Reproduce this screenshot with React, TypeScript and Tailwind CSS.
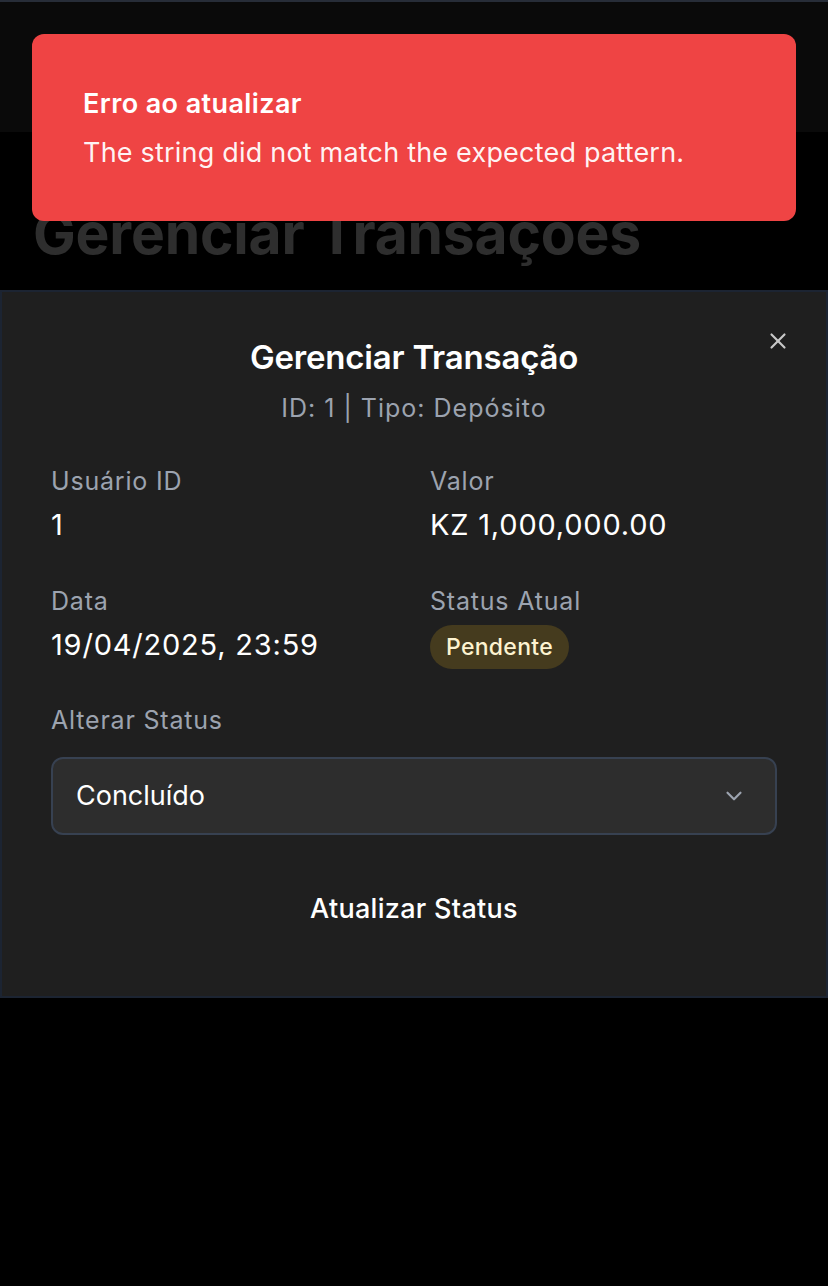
import { X, ChevronDown } from "lucide-react"

const font = { fontFamily: "Inter, 'Noto Sans', sans-serif" }

const Field = ({ label, children }: { label: string; children: React.ReactNode }) => (
  <div className="flex flex-col">
    <span className="text-[25px] leading-[32px] tracking-[0.8px] text-[#9ca3af]">{label}</span>
    {children}
  </div>
)

export default function App() {
  return (
    <div style={font} className="relative min-h-[1286px] w-full bg-black text-white">
      {/* page header behind overlay */}
      <header className="h-[132px] border-t-2 border-[#272d38] bg-[#0a0a0a]" />
      <div className="h-[158px] px-[33px] pt-[74px]">
        <h1 className="text-[57px] font-bold leading-[56px] tracking-[-0.2px] text-[#2e2e2e]">
          Gerenciar Transações
        </h1>
      </div>

      {/* modal */}
      <div className="relative border-2 border-[#1c2432] bg-[#1f1f1f] px-[49px] pb-[57px] pt-[45px]">
        <button className="absolute right-[35px] top-[36px] text-[#c8c8c8]">
          <X size={26} strokeWidth={2} />
        </button>
        <h2 className="text-center text-[33px] font-semibold leading-[40px] tracking-[-0.2px]">
          Gerenciar Transação
        </h2>
        <p className="mt-[15px] text-center text-[25px] leading-[32px] tracking-[1px] text-[#9ca3af]">
          ID: 1 | Tipo: Depósito
        </p>

        <div className="mt-[41px] grid grid-cols-2 gap-x-8 gap-y-[42px]">
          <Field label="Usuário ID">
            <span className="mt-[10px] text-[29px] leading-[36px] tracking-[0.8px]">1</span>
          </Field>
          <Field label="Valor">
            <span className="mt-[10px] text-[29px] leading-[36px] tracking-[0.8px]">KZ 1,000,000.00</span>
          </Field>
          <Field label="Data">
            <span className="mt-[10px] text-[29px] leading-[36px] tracking-[0.8px]">19/04/2025, 23:59</span>
          </Field>
          <Field label="Status Atual">
            <span className="mt-[8px] flex h-[44px] w-fit items-center rounded-full bg-[#453b1e] px-[16px] text-[23px] font-medium tracking-[0.3px] text-[#fdf3d0]">
              Pendente
            </span>
          </Field>
        </div>

        <p className="mt-[35px] text-[25px] leading-[32px] tracking-[0.8px] text-[#9ca3af]">Alterar Status</p>
        <div className="mt-[21px] flex h-[78px] items-center justify-between rounded-[12px] border-2 border-[#374151] bg-[#2d2d2d] pl-[23px] pr-[28px]">
          <span className="text-[27px]">Concluído</span>
          <ChevronDown size={26} strokeWidth={2} className="text-[#9ca3af]" />
        </div>

        <button className="mt-[44px] flex h-[60px] w-full items-center justify-center text-[27px] font-medium tracking-[0.3px]">
          Atualizar Status
        </button>
      </div>

      {/* toast */}
      <div className="absolute left-[32px] right-[32px] top-[34px] rounded-[12px] bg-[#ef4444] pb-[52px] pl-[51px] pr-6 pt-[54px]">
        <p className="text-[27px] font-semibold leading-[32px] tracking-[0.4px]">Erro ao atualizar</p>
        <p className="mt-[17px] text-[27px] leading-[32px] tracking-[0.2px] text-white/95">
          The string did not match the expected pattern.
        </p>
      </div>
    </div>
  )
}
